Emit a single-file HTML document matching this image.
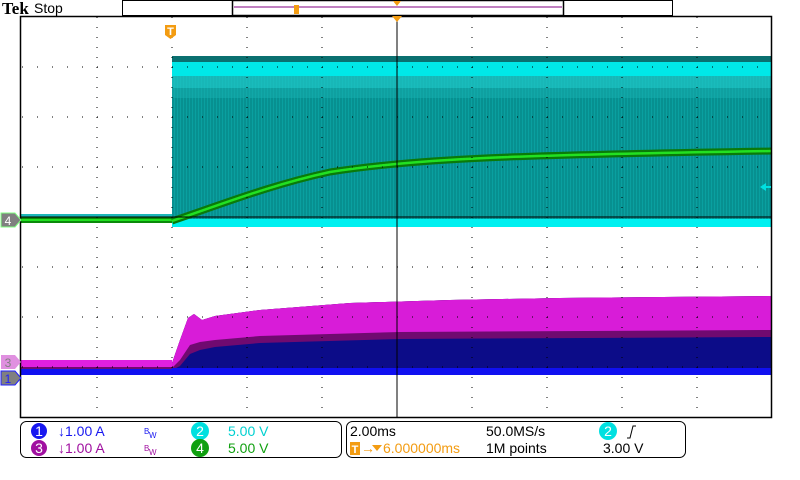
<!DOCTYPE html>
<html><head><meta charset="utf-8"><style>
body{margin:0;width:800px;height:480px;background:#fff;overflow:hidden;font-family:"Liberation Sans",sans-serif}
svg{position:absolute;left:0;top:0}
.t{font-family:"Liberation Sans",sans-serif;font-size:14px}
</style></head><body>
<svg width="800" height="480" viewBox="0 0 800 480">
<defs>
<pattern id="vl" width="3" height="10" patternUnits="userSpaceOnUse"><rect width="3" height="10" fill="#079090"/><rect width="1" height="10" fill="#0aa0a0"/></pattern>
</defs>
<text x="2" y="14" font-family="Liberation Serif" font-weight="bold" font-size="17" fill="#000">Tek</text>
<text x="34" y="13" class="t" font-size="13" fill="#000">Stop</text>
<rect x="122.5" y="0.5" width="550" height="15" fill="#fff" stroke="#000"/>
<rect x="232.5" y="0.5" width="331" height="15" fill="#fff" stroke="#000" stroke-width="1.5"/>
<line x1="234" y1="7" x2="562" y2="7" stroke="#800080" stroke-width="1"/>
<rect x="294" y="5" width="5" height="9" fill="#f39c12"/>
<polygon points="393,1 401,1 397,6" fill="#f39c12"/>
<rect x="20" y="16" width="751" height="401" fill="#fff"/>
<!-- cyan ch2 -->
<rect x="20" y="214" width="152" height="3" fill="#1cb8b8"/>
<rect x="172" y="58" width="600" height="162" fill="url(#vl)"/>
<rect x="172" y="56" width="600" height="6" fill="#0a7070"/>
<rect x="172" y="62" width="600" height="14" fill="#00e8e8"/>
<rect x="172" y="76" width="600" height="12" fill="#20c8c8" opacity="0.7"/>
<rect x="172" y="88" width="600" height="10" fill="#18b0b0" opacity="0.5"/>
<rect x="172" y="219" width="600" height="8" fill="#00f0f0"/>
<!-- green ch4 -->
<rect x="20" y="217" width="152" height="6" fill="#0a8a0a"/>
<rect x="20" y="219" width="152" height="2" fill="#20e020"/>
<path d="M172,221 C220,205 270,185 330,172 C420,158 520,155 772,151" fill="none" stroke="#0a7a0a" stroke-width="7"/>
<path d="M172,221 C220,205 270,185 330,172 C420,158 520,155 772,151" fill="none" stroke="#22e022" stroke-width="2.5"/>
<!-- magenta/blue -->
<rect x="20" y="360" width="152" height="7" fill="#e020e0"/>
<rect x="20" y="367" width="152" height="2" fill="#700a70"/>
<rect x="20" y="369" width="152" height="6" fill="#1010f0"/>
<polygon points="172,363 180,340 188,318 194,314 202,320 215,316 260,310 350,303 450,300 560,298 771,296 771,375 172,375" fill="#0c0c88"/>
<polygon points="172,363 180,340 188,318 194,314 202,320 215,316 260,310 350,303 450,300 560,298 771,296 771,337 400,339 260,343 215,347 200,350 190,354 180,366 172,370" fill="#700a70"/>
<polygon points="172,363 180,340 188,318 194,314 202,320 215,316 260,310 350,303 450,300 560,298 771,296 771,330 400,332 260,336 215,340 200,342 190,345 180,360 172,368" fill="#d81cd8"/>
<rect x="172" y="368" width="599" height="7" fill="#1010f0"/>
<g stroke="#000" stroke-width="1" stroke-dasharray="1,9">
<line x1="97" y1="17" x2="97" y2="417"/><line x1="172" y1="17" x2="172" y2="417"/><line x1="247" y1="17" x2="247" y2="417"/><line x1="322" y1="17" x2="322" y2="417"/>
<line x1="472" y1="17" x2="472" y2="417"/><line x1="547" y1="17" x2="547" y2="417"/><line x1="622" y1="17" x2="622" y2="417"/><line x1="697" y1="17" x2="697" y2="417"/>
<line x1="22" y1="67" x2="771" y2="67" stroke-dasharray="1,14"/><line x1="22" y1="117" x2="771" y2="117" stroke-dasharray="1,14"/><line x1="22" y1="167" x2="771" y2="167" stroke-dasharray="1,14"/>
<line x1="22" y1="267" x2="771" y2="267" stroke-dasharray="1,14"/><line x1="22" y1="317" x2="771" y2="317" stroke-dasharray="1,14"/><line x1="22" y1="367" x2="771" y2="367" stroke-dasharray="1,14"/>
</g>
<line x1="20" y1="217" x2="771" y2="217" stroke="#000" stroke-width="1"/>
<line x1="397" y1="17" x2="397" y2="417" stroke="#000" stroke-width="1"/>
<rect x="20.5" y="16.5" width="751" height="401" fill="none" stroke="#000" stroke-width="1.5"/>
<polygon points="392,16 402,16 397,22" fill="#f39c12"/>
<path d="M165,25 h11 v10 l-5.5,4 l-5.5,-4 z" fill="#f39c12"/>
<text x="170.5" y="35" text-anchor="middle" font-size="11" font-weight="bold" fill="#fff">T</text>
<polygon points="760,187 766,183 766,191" fill="#00e0e0"/><rect x="765" y="186" width="6" height="2" fill="#00e0e0"/>
<path d="M1,213 h14 l6,7 l-6,7 h-14 z" fill="#808080" stroke="#80ff80" stroke-width="1"/>
<text x="8" y="225" text-anchor="middle" font-size="12" fill="#fff">4</text>
<path d="M1,355 h14 l6,7 l-6,7 h-14 z" fill="#e090e0"/>
<text x="8" y="367" text-anchor="middle" font-size="12" fill="#808080">3</text>
<path d="M1,371 h14 l6,7 l-6,7 h-14 z" fill="#808080" stroke="#2020ff" stroke-width="1"/>
<text x="8" y="383" text-anchor="middle" font-size="12" fill="#2020ff">1</text>
<rect x="20.5" y="421.5" width="321" height="36" rx="6" fill="#fff" stroke="#000"/>
<rect x="346.5" y="421.5" width="339" height="36" rx="6" fill="#fff" stroke="#000"/>
<circle cx="39" cy="431" r="8" fill="#1818f0"/><text x="39" y="436" text-anchor="middle" class="t" font-size="13" fill="#fff">1</text>
<text x="58" y="436" class="t" font-size="13" fill="#1818f0">↓1.00 A</text>
<text x="144" y="434" font-size="8" fill="#1818f0">B</text><text x="149" y="438" font-size="8" fill="#1818f0">W</text>
<circle cx="200" cy="431" r="9" fill="#00e0e0"/><text x="200" y="436" text-anchor="middle" class="t" font-size="13" fill="#fff">2</text>
<text x="228" y="436" class="t" font-size="13" fill="#00d0d0">5.00 V</text>
<circle cx="39" cy="448" r="8" fill="#a010a0"/><text x="39" y="453" text-anchor="middle" class="t" font-size="13" fill="#fff">3</text>
<text x="58" y="453" class="t" font-size="13" fill="#a010a0">↓1.00 A</text>
<text x="144" y="451" font-size="8" fill="#a010a0">B</text><text x="149" y="455" font-size="8" fill="#a010a0">W</text>
<circle cx="200" cy="448" r="9" fill="#10a010"/><text x="200" y="453" text-anchor="middle" class="t" font-size="13" fill="#fff">4</text>
<text x="228" y="453" class="t" font-size="13" fill="#10a010">5.00 V</text>
<text x="350" y="436" class="t" font-size="13" fill="#000">2.00ms</text>
<text x="486" y="436" class="t" font-size="13" fill="#000">50.0MS/s</text>
<circle cx="608" cy="431" r="9" fill="#00e0e0"/><text x="608" y="436" text-anchor="middle" class="t" font-size="13" fill="#fff">2</text>
<path d="M627,438 h3 l3,-12 h3" fill="none" stroke="#000" stroke-width="1"/>
<rect x="350" y="442" width="10" height="13" fill="#f39c12"/><text x="355" y="453" text-anchor="middle" font-size="11" font-weight="bold" fill="#fff">T</text>
<text x="361" y="453" class="t" font-size="12" fill="#f39c12">→</text>
<polygon points="372,445 382,445 377,451" fill="#f39c12"/>
<text x="383" y="453" class="t" font-size="13" fill="#f39c12">6.000000ms</text>
<text x="486" y="453" class="t" font-size="13" fill="#000">1M points</text>
<text x="603" y="453" class="t" font-size="13" fill="#000">3.00 V</text>
</svg>
</body></html>
